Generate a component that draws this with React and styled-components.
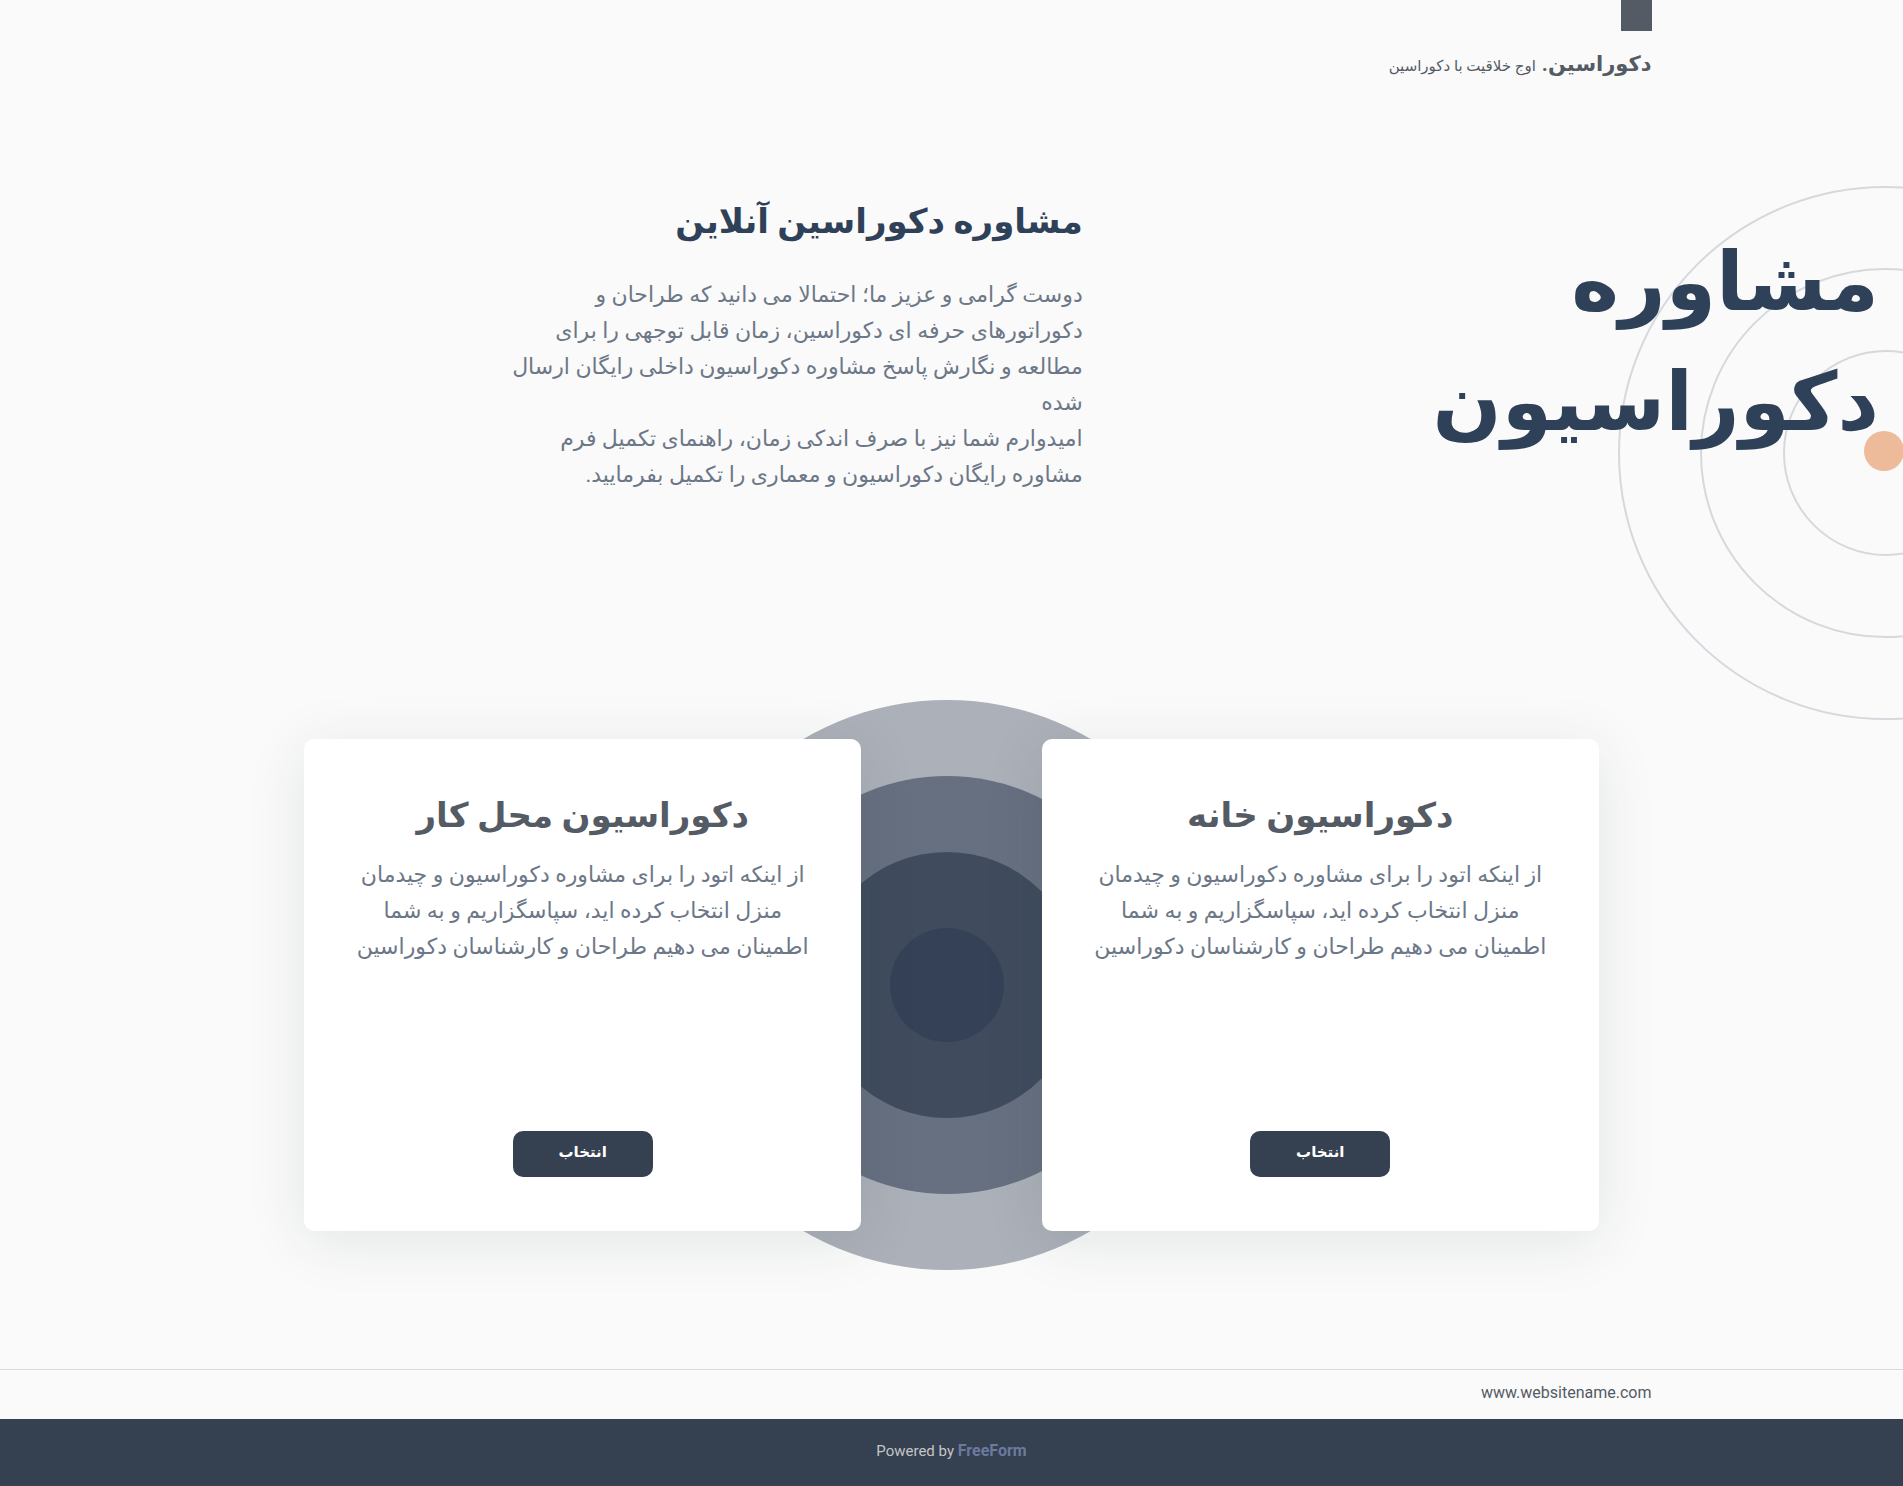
import React from 'react';
import styled, { createGlobalStyle } from 'styled-components';

const GlobalStyle = createGlobalStyle`
  * {
    box-sizing: border-box;
  }

  body {
    margin: 0;
    background: #fafafa;
    color: #545b64;
    direction: rtl;
    font-family: Roboto, "DejaVu Sans", sans-serif;
    overflow-x: hidden;
  }

  h1, h2, h3, p {
    margin: 0;
  }
`;

const Page = styled.div`
  position: relative;
  display: flex;
  flex-direction: column;
  min-height: 100vh;
  overflow: hidden;
`;

const Container = styled.div`
  width: 100%;
  max-width: 1400px;
  margin: 0 auto;
`;

// header
const Mark = styled.div`
  width: 31px;
  height: 31px;
  background: #545b64;
`;

const Brand = styled.div`
  display: flex;
  align-items: baseline;
  gap: 6px;
  margin-top: 15px;
  line-height: 36px;
`;

const BrandName = styled.a`
  color: #545b64;
  font-size: 21px;
  font-weight: 700;
  text-decoration: none;
`;

const Tagline = styled.span`
  font-size: 15px;
`;

// hero
const Hero = styled.section`
  display: flex;
  align-items: flex-start;
  margin-top: 109px;
  min-height: 546px;
`;

const HeroTitle = styled.h1`
  position: relative;
  flex: 1;
  margin-top: 30px;
  padding-right: 24px;
  color: #2f4158;
  font-size: 81px;
  font-weight: 700;
  line-height: 120px;
`;

const Intro = styled.div`
  width: 30%;
  margin-left: 27%;
  padding-right: 2px;
`;

const IntroTitle = styled.h2`
  color: #2f4158;
  font-size: 34px;
  font-weight: 700;
  line-height: 56px;
`;

const Text = styled.p`
  color: #6c7787;
  font-size: 22px;
  line-height: 36px;
  white-space: nowrap;
`;

const IntroText = styled(Text)`
  margin-top: 28px;
`;

// rings behind the hero title, cut by the right edge of the page
const Rings = styled.svg`
  position: absolute;
  top: 186px;
  right: -250px;
  width: 535px;
  height: 535px;
  pointer-events: none;
`;

// cards
const Cards = styled.section`
  position: relative;
  display: flex;
  justify-content: space-between;
  width: 68%;
  margin: 0 auto;
`;

const Target = styled.svg`
  position: absolute;
  top: -39px;
  left: 50%;
  width: 571px;
  height: 571px;
  margin-left: -290px;
`;

const Card = styled.article`
  position: relative;
  display: flex;
  flex-direction: column;
  align-items: center;
  justify-content: space-between;
  width: 43%;
  min-height: 492px;
  padding: 46px 40px 54px;
  border-radius: 10px;
  background: #fff;
  box-shadow: 0 10px 60px rgba(20, 50, 40, 0.1);
  text-align: center;
`;

const CardTitle = styled.h3`
  margin-bottom: 12px;
  color: #545b64;
  font-size: 34px;
  font-weight: 700;
  line-height: 60px;
`;

const SelectButton = styled.button`
  width: 140px;
  height: 46px;
  padding: 0 0 4px;
  border: 0;
  border-radius: 10px;
  background: #354050;
  color: #fff;
  font-family: inherit;
  font-size: 15px;
  font-weight: 700;
  cursor: pointer;
`;

// footer
const SiteBar = styled.div`
  margin-top: auto;
  border-top: 1px solid #d8dadd;
`;

const SiteLink = styled.a`
  display: block;
  padding-bottom: 3px;
  color: #545b64;
  font-size: 16px;
  line-height: 46px;
  text-decoration: none;
`;

const Footer = styled.footer`
  padding-bottom: 3px;
  background: #354050;
  color: #c4c5c7;
  direction: ltr;
  font-size: 15px;
  line-height: 64px;
  text-align: center;
`;

const FooterLink = styled.a`
  color: #6b7a9e;
  font-size: 16px;
  font-weight: 700;
  text-decoration: none;
`;

const cards = ['دکوراسیون خانه', 'دکوراسیون محل کار'];

function HeroRings() {
  return (
    <Rings viewBox="0 0 535 535" fill="none" stroke="#d5d8dd" strokeWidth="2" aria-hidden="true">
      <circle cx="267" cy="267" r="266" />
      <circle cx="267" cy="267" r="184" />
      <circle cx="268" cy="267" r="102" />
      <circle cx="266" cy="265" r="20" fill="#edbb9a" stroke="none" />
    </Rings>
  );
}

function CardsTarget() {
  return (
    <Target viewBox="0 0 571 571" aria-hidden="true">
      <circle cx="285" cy="285" r="285" fill="#acb0b9" />
      <circle cx="285" cy="285" r="209" fill="#677081" />
      <circle cx="285" cy="285" r="133" fill="#404c5e" />
      <circle cx="285" cy="285" r="57" fill="#344157" />
    </Target>
  );
}

function App() {
  return (
    <>
      <GlobalStyle />
      <Page>
        <HeroRings />
        <Container as="header">
          <Mark />
          <Brand>
            <BrandName href="#">دکوراسین.</BrandName>
            <Tagline>اوج خلاقیت با دکوراسین</Tagline>
          </Brand>
        </Container>

        <Hero>
          <HeroTitle>
            مشاوره<br />
            دکوراسیون
          </HeroTitle>
          <Intro>
            <IntroTitle>مشاوره دکوراسین آنلاین</IntroTitle>
            <IntroText>
              دوست گرامی و عزیز ما؛ احتمالا می دانید که طراحان و<br />
              دکوراتورهای حرفه ای دکوراسین، زمان قابل توجهی را برای<br />
              مطالعه و نگارش پاسخ مشاوره دکوراسیون داخلی رایگان ارسال<br />
              شده<br />
              امیدوارم شما نیز با صرف اندکی زمان، راهنمای تکمیل فرم<br />
              مشاوره رایگان دکوراسیون و معماری را تکمیل بفرمایید.
            </IntroText>
          </Intro>
        </Hero>

        <Cards>
          <CardsTarget />
          {cards.map((title) => (
            <Card key={title}>
              <div>
                <CardTitle>{title}</CardTitle>
                <Text>
                  از اینکه اتود را برای مشاوره دکوراسیون و چیدمان<br />
                  منزل انتخاب کرده اید، سپاسگزاریم و به شما<br />
                  اطمینان می دهیم طراحان و کارشناسان دکوراسین
                </Text>
              </div>
              <SelectButton type="button">انتخاب</SelectButton>
            </Card>
          ))}
        </Cards>

        <SiteBar>
          <Container>
            <SiteLink href="#">www.websitename.com</SiteLink>
          </Container>
        </SiteBar>
        <Footer>
          Powered by <FooterLink href="#">FreeForm</FooterLink>
        </Footer>
      </Page>
    </>
  );
}

export default App;
